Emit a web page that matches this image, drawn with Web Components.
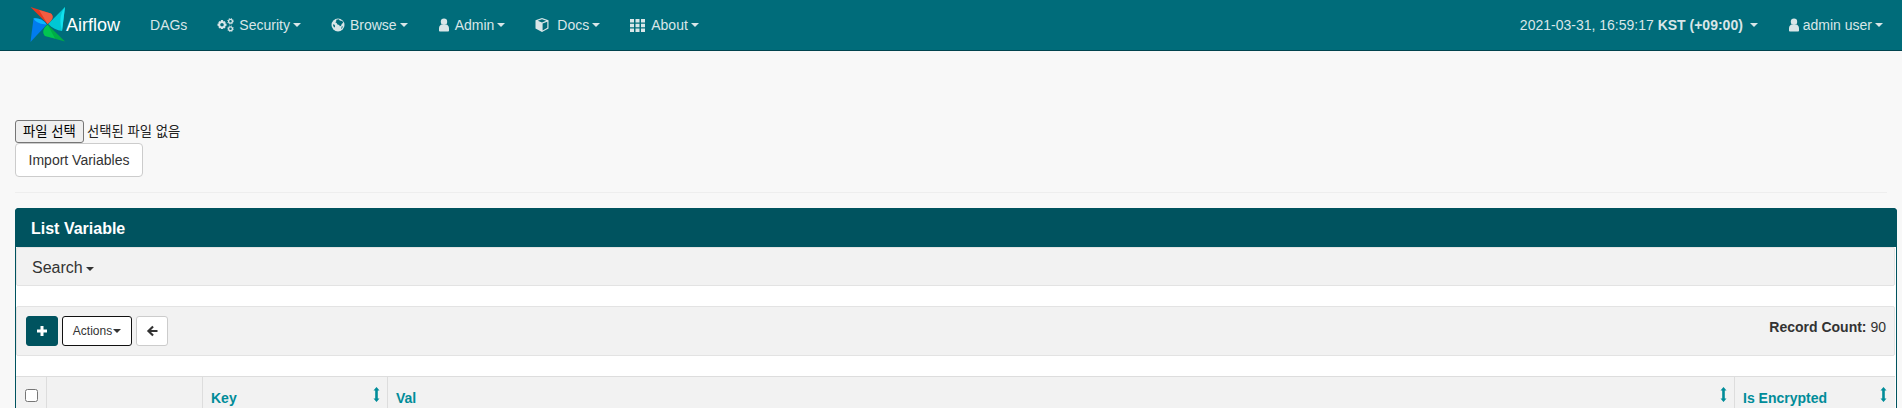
<!DOCTYPE html>
<html lang="ko">
<head>
<meta charset="utf-8">
<title>List Variable - Airflow</title>
<style>
  html, body { margin: 0; padding: 0; height: 408px; overflow: hidden; }
  body {
    background: #f8f8f8;
    color: #333;
    font: 14px/20px "Liberation Sans", "Noto Sans CJK KR", sans-serif;
  }
</style>
</head>
<body>
<af-navbar></af-navbar>
<af-import></af-import>
<af-panel heading="List Variable"></af-panel>

<script>
const caret = `<i class="caret"></i>`;
const caretCss = `
  .caret {
    display: inline-block; width: 0; height: 0; margin-left: 3px; vertical-align: middle;
    border-top: 4px solid; border-right: 4px solid transparent; border-left: 4px solid transparent;
  }
`;

const icons = {
  gears: `<svg width="17" height="14" viewBox="1 0 17 14" fill="currentColor"><path fill-rule="evenodd" d="M5 2h2l.3 1.400 1-.5 1.400 1.400-.6 1 1.400.4v2l-1.400.3.6 1.100-1.400 1.400-1-.6L7 11H5l-.3-1.100-1 .6-1.400-1.400.6-1.100L1.500 7.700v-2L2.900 5.300l-.6-1 1.400-1.400 1 .5zM6 4.900a1.800 1.800 0 1 0 0 3.600 1.800 1.800 0 0 0 0-3.600z"/><g fill="none" stroke="currentColor"><circle cx="14.500" cy="3.200" r="1.900" stroke-width="1.300"/><circle cx="14.500" cy="10.800" r="1.900" stroke-width="1.300"/><circle cx="14.500" cy="3.200" r="2.900" stroke-width=".9" stroke-dasharray="1 1.300"/><circle cx="14.500" cy="10.800" r="2.900" stroke-width=".9" stroke-dasharray="1 1.300"/></g></svg>`,
  globe: `<svg width="14" height="14" viewBox="0 0 14 14"><circle cx="7" cy="7" r="6.500" fill="currentColor"/><path fill="#006c7a" d="M5.200 1.800l2.600-.5 1 1.100 2.500.7.900 1.700-1.500 1.200-.6 1.800-1.300.5-.6-1.300-1.700-.4-.9-1.500-1.300-.9 1-1zM3 6.300l1.100 1.400-.3 1.700-1-.5-.9-2.200zM10.800 8.300l1.100.2-1 2-.8.400z"/></svg>`,
  user: `<svg width="12" height="14" viewBox="0 0 12 14" fill="currentColor"><circle cx="6" cy="3.700" r="3.200"/><path d="M1 12.400v-2C1 8.100 2.400 6.700 4 6.500c1.200.8 2.800.8 4 0 1.600.2 3 1.600 3 3.900v2c0 .7-.5 1.100-1.100 1.100H2.100C1.500 13.500 1 13.100 1 12.400z"/></svg>`,
  cube: `<svg width="14" height="14" viewBox="0 0 14 14" fill="currentColor"><path fill-rule="evenodd" d="M7 0l6.500 2.300v8.200L7 14 .5 10.500V2.300zM7 1.300L2.800 2.800 7 4.400l4.200-1.600zM7.600 5.500v6.900l4.700-2.600V3.700z"/></svg>`,
  th: `<svg width="15" height="13" viewBox="0 0 15 13" fill="currentColor"><path d="M0 0h4v3.500H0zM5.500 0h4v3.500h-4zM11 0h4v3.500h-4zM0 4.750h4v3.500H0zM5.500 4.750h4v3.500h-4zM11 4.750h4v3.500h-4zM0 9.500h4V13H0zM5.500 9.500h4V13h-4zM11 9.500h4V13h-4z"/></svg>`,
};

class AfNavItem extends HTMLElement {
  connectedCallback() {
    const icon = this.getAttribute("icon");
    const arrow = this.hasAttribute("dropdown");
    const gap = this.getAttribute("gap") || 6;
    this.attachShadow({ mode: "open" }).innerHTML = `
      <style>
        :host { display: flex; align-items: center; height: 50px; padding: 0 15px; color: #d9e6e8; white-space: nowrap; }
        .ic { display: inline-flex; margin-right: ${gap}px; }
        ${caretCss}
      </style>
      ${icon ? `<span class="ic">${icons[icon]}</span>` : ""}<slot></slot>${arrow ? caret : ""}
    `;
  }
}
customElements.define("af-nav-item", AfNavItem);

class AfNavbar extends HTMLElement {
  connectedCallback() {
    this.attachShadow({ mode: "open" }).innerHTML = `
      <style>
        :host { display: flex; align-items: center; height: 50px; background: #006c7a; border-bottom: 1px solid #00434e; padding-left: 30px; padding-right: 4px; }
        .brand { display: flex; align-items: center; color: #fff; font-size: 18px; margin-right: 15px; }
        .spacer { flex: 1; }
      </style>
      <div class="brand">
        <svg width="36" height="36" viewBox="30 8 36 36">
          <path fill="#e43921" d="M30.500 8L47.600 24.900C53 21 54 17 51 14.500z"/>
          <path fill="#f5694e" d="M39 11L51 14.500C54 17 53 21 47.600 24.900z" opacity=".75"/>
          <path fill="#00c7d4" d="M65 8L48.200 24.900C52 29 57 31 62 32z"/>
          <path fill="#11e1ee" d="M65 8L62 32C60 24 59 16 65 8z"/>
          <path fill="#00ad46" d="M65 42.500L47.700 25.700C43 29 42 34 45 37z"/>
          <path fill="#04d659" d="M55 39.500L45 37C42 34 43 29 47.700 25.700z" opacity=".6"/>
          <path fill="#017cee" d="M30.500 43L46.800 25.400C43 20.500 38 18.500 33.500 19.500z"/>
          <path fill="#0cb6ff" d="M33.500 19.500C38 18.500 43 20.500 46.800 25.400C42 25.500 36 24 33.500 19.500z"/>
        </svg>
        <span>Airflow</span>
      </div>
      <af-nav-item>DAGs</af-nav-item>
      <af-nav-item icon="gears" gap="5" dropdown>Security</af-nav-item>
      <af-nav-item icon="globe" gap="5" dropdown>Browse</af-nav-item>
      <af-nav-item icon="user" gap="5" dropdown>Admin</af-nav-item>
      <af-nav-item icon="cube" gap="8" dropdown>Docs</af-nav-item>
      <af-nav-item icon="th" dropdown>About</af-nav-item>
      <div class="spacer"></div>
      <af-nav-item dropdown>2021-03-31, 16:59:17&nbsp;<b>KST (+09:00)</b>&nbsp;</af-nav-item>
      <af-nav-item icon="user" gap="3" dropdown>admin user</af-nav-item>
    `;
  }
}
customElements.define("af-navbar", AfNavbar);

class AfImport extends HTMLElement {
  connectedCallback() {
    this.attachShadow({ mode: "open" }).innerHTML = `
      <style>
        :host { display: block; padding: 69px 15px 0; }
        .file { display: flex; align-items: center; height: 23px; font-size: 13.333px; color: #222; }
        .file button {
          font: inherit; height: 23px; width: 69px; padding: 0; margin-right: 3px; color: #000;
          background: #efefef; border: 1px solid #767676; border-radius: 3px;
        }
        .imp {
          display: block; width: 128px; height: 34px; padding: 0; font: inherit; font-size: 14px; color: #333;
          background: #fff; border: 1px solid #ccc; border-radius: 4px;
        }
        hr { border: 0; border-top: 1px solid #eee; margin: 15px 0 15px; }
      </style>
      <div class="file"><button>파일 선택</button><span>선택된 파일 없음</span></div>
      <button class="imp">Import Variables</button>
      <hr>
    `;
  }
}
customElements.define("af-import", AfImport);

class AfPanel extends HTMLElement {
  connectedCallback() {
    this.attachShadow({ mode: "open" }).innerHTML = `
      <style>
        :host { display: block; margin: 0 5px 0 15px; background: #fff; border: 1px solid #00535f; border-bottom: 0; border-radius: 4px 4px 0 0; }
        .head { height: 37px; line-height: 37px; padding: 2px 0 0 16px; background: #00535f; color: #fff; font-size: 16px; font-weight: bold; margin: -1px -1px 0; border-radius: 4px 4px 0 0; }
        .bar { background: #f2f2f2; border: 1px solid #e3e3e3; border-radius: 2px; margin-right: 1px; }
        .search { height: 37px; line-height: 39px; padding-left: 15px; font-size: 16px; }
        .gap { height: 20px; }
        .tools { height: 48px; display: flex; justify-content: space-between; padding: 0 8px 0 9px; }
        .btns { display: flex; gap: 4px; margin-top: 9px; height: 30px; }
        .btns button { padding: 0; border-radius: 3px; font: inherit; font-size: 12px; color: #333; background: #fff; border: 1px solid #ccc; display: flex; align-items: center; justify-content: center; }
        .add { width: 32px; background: #00535f !important; border-color: #00535f !important; color: #fff !important; }
        .act { width: 70px; border-color: #111 !important; }
        .back { width: 32px; }
        .count { margin-top: 10px; font-size: 14px; }
        ${caretCss}
        .btns .caret { margin-left: 1px; }
      </style>
      <div class="head">List Variable</div>
      <div class="bar search">Search${caret}</div>
      <div class="gap"></div>
      <div class="bar tools">
        <div class="btns">
          <button class="add"><svg width="12" height="12" viewBox="0 0 12 12" fill="currentColor"><path d="M4.500 1h3v3.500H11v3H7.500V11h-3V7.500H1v-3h3.500z"/></svg></button>
          <button class="act">Actions${caret}</button>
          <button class="back"><svg width="12" height="12" viewBox="0 0 12 12" fill="currentColor"><path d="M6.300.7l1.500 1.500L5 5h6.500v2.100H5l2.800 2.700-1.500 1.500L.9 6z"/></svg></button>
        </div>
        <div class="count"><b>Record Count:</b> 90</div>
      </div>
      <div class="gap"></div>
      <af-table></af-table>
    `;
  }
}
customElements.define("af-panel", AfPanel);

class AfTable extends HTMLElement {
  connectedCallback() {
    const sort = `<svg class="sort" width="7" height="15" viewBox="0 0 7 15" fill="currentColor"><path d="M3.500 0L6.500 3.500H4.800v8H6.500L3.500 15 .5 11.500h1.700v-8H.5z"/></svg>`;
    this.attachShadow({ mode: "open" }).innerHTML = `
      <style>
        :host { display: grid; grid-template-columns: 31px 156px 185px 1fr 160px; height: 60px; background: #f2f2f2; border-top: 1px solid #ddd; margin-right: 1px; }
        .th { position: relative; border-right: 1px solid #ddd; padding: 11px 8px 0; font-weight: bold; color: #008c99; box-sizing: border-box; }
        .th:last-child { border-right: 0; }
        .sort { position: absolute; right: 7px; top: 10px; }
        .th:last-child .sort { right: 8px; }
        input { margin: 12px 0 0 9px; width: 13px; height: 13px; appearance: none; background: #fff; border: 1px solid #767676; border-radius: 2.500px; display: block; }
        .c0 { padding: 0; }
      </style>
      <div class="th c0"><input type="checkbox"></div>
      <div class="th"></div>
      <div class="th">Key${sort}</div>
      <div class="th">Val${sort}</div>
      <div class="th">Is Encrypted${sort}</div>
    `;
  }
}
customElements.define("af-table", AfTable);
</script>
</body>
</html>
